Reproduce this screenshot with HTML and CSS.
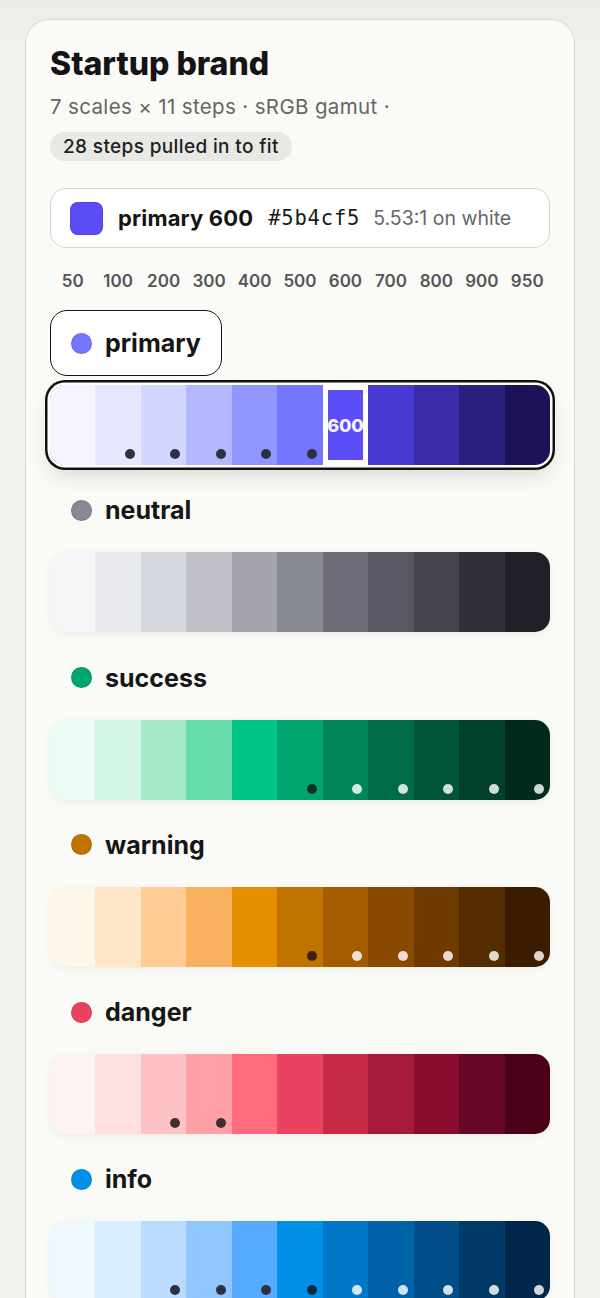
FILE: index.html
```html
<!DOCTYPE html>
<html lang="en">
<head>
<meta charset="utf-8">
<title>Startup brand</title>
<link rel="stylesheet" href="styles.css">
</head>
<body>
<main class="card">
  <h1 class="title">Startup brand</h1>
  <p class="meta">7 scales × 11 steps · sRGB gamut ·</p>
  <span class="pill">28 steps pulled in to fit</span>

  <div class="info">
    <span class="info-chip"></span>
    <span class="info-name">primary 600</span>
    <span class="info-hex">#5b4cf5</span>
    <span class="info-ratio">5.53:1 on white</span>
  </div>

  <div class="steps">
    <span>50</span><span>100</span><span>200</span><span>300</span><span>400</span><span>500</span><span>600</span><span>700</span><span>800</span><span>900</span><span>950</span>
  </div>

  <section class="scale">
    <div class="label label-active"><span class="label-dot primary-dot"></span>primary</div>
    <div class="strip strip-active">
      <div class="sw p50"></div>
      <div class="sw p100"><i class="dot dark"></i></div>
      <div class="sw p200"><i class="dot dark"></i></div>
      <div class="sw p300"><i class="dot dark"></i></div>
      <div class="sw p400"><i class="dot dark"></i></div>
      <div class="sw p500"><i class="dot dark"></i></div>
      <div class="sw p600 selected">600</div>
      <div class="sw p700"></div>
      <div class="sw p800"></div>
      <div class="sw p900"></div>
      <div class="sw p950"></div>
    </div>
  </section>

  <section class="scale">
    <div class="label"><span class="label-dot neutral-dot"></span>neutral</div>
    <div class="strip">
      <div class="sw n50"></div>
      <div class="sw n100"></div>
      <div class="sw n200"></div>
      <div class="sw n300"></div>
      <div class="sw n400"></div>
      <div class="sw n500"></div>
      <div class="sw n600"></div>
      <div class="sw n700"></div>
      <div class="sw n800"></div>
      <div class="sw n900"></div>
      <div class="sw n950"></div>
    </div>
  </section>

  <section class="scale">
    <div class="label"><span class="label-dot success-dot"></span>success</div>
    <div class="strip">
      <div class="sw s50"></div>
      <div class="sw s100"></div>
      <div class="sw s200"></div>
      <div class="sw s300"></div>
      <div class="sw s400"></div>
      <div class="sw s500"><i class="dot deep-green"></i></div>
      <div class="sw s600"><i class="dot light"></i></div>
      <div class="sw s700"><i class="dot light"></i></div>
      <div class="sw s800"><i class="dot light"></i></div>
      <div class="sw s900"><i class="dot light"></i></div>
      <div class="sw s950"><i class="dot light"></i></div>
    </div>
  </section>

  <section class="scale">
    <div class="label"><span class="label-dot warning-dot"></span>warning</div>
    <div class="strip">
      <div class="sw w50"></div>
      <div class="sw w100"></div>
      <div class="sw w200"></div>
      <div class="sw w300"></div>
      <div class="sw w400"></div>
      <div class="sw w500"><i class="dot deep-brown"></i></div>
      <div class="sw w600"><i class="dot light"></i></div>
      <div class="sw w700"><i class="dot light"></i></div>
      <div class="sw w800"><i class="dot light"></i></div>
      <div class="sw w900"><i class="dot light"></i></div>
      <div class="sw w950"><i class="dot light"></i></div>
    </div>
  </section>

  <section class="scale">
    <div class="label"><span class="label-dot danger-dot"></span>danger</div>
    <div class="strip">
      <div class="sw d50"></div>
      <div class="sw d100"></div>
      <div class="sw d200"><i class="dot dark-brown"></i></div>
      <div class="sw d300"><i class="dot dark-brown"></i></div>
      <div class="sw d400"></div>
      <div class="sw d500"></div>
      <div class="sw d600"></div>
      <div class="sw d700"></div>
      <div class="sw d800"></div>
      <div class="sw d900"></div>
      <div class="sw d950"></div>
    </div>
  </section>

  <section class="scale">
    <div class="label"><span class="label-dot info-dot"></span>info</div>
    <div class="strip">
      <div class="sw i50"></div>
      <div class="sw i100"></div>
      <div class="sw i200"><i class="dot dark"></i></div>
      <div class="sw i300"><i class="dot dark"></i></div>
      <div class="sw i400"><i class="dot dark"></i></div>
      <div class="sw i500"><i class="dot deep-navy"></i></div>
      <div class="sw i600"><i class="dot light"></i></div>
      <div class="sw i700"><i class="dot light"></i></div>
      <div class="sw i800"><i class="dot light"></i></div>
      <div class="sw i900"><i class="dot light"></i></div>
      <div class="sw i950"><i class="dot light"></i></div>
    </div>
  </section>
</main>
</body>
</html>
```

FILE: styles.css
```css
* { box-sizing: border-box; }

html, body { margin: 0; }

body {
  background: linear-gradient(#ecece8, #f1f1ed 60px);
  padding: 19px 25px 0;
  font-family: Inter, "Noto Sans", "Liberation Sans", sans-serif;
  color: #161616;
}

.card {
  width: 550px;
  background: #fafaf6;
  border: 1px solid #dadad4;
  border-radius: 24px;
  padding: 26px 24px 40px;
  box-shadow: 0 1px 2px rgba(0,0,0,0.03);
}

.title {
  margin: 0;
  font-size: 32px;
  line-height: 36px;
  font-weight: 800;
  letter-spacing: 0;
  color: #141414;
}

.meta {
  margin: 12px 0 0;
  font-size: 20.5px;
  line-height: 26px;
  letter-spacing: 0.35px;
  color: #666664;
  font-weight: 400;
}

.pill {
  display: inline-block;
  margin-top: 12px;
  height: 29px;
  line-height: 29px;
  padding: 0 13px 0 13px;
  border-radius: 15px;
  background: #e8e8e4;
  font-size: 19px;
  letter-spacing: 0.36px;
  font-weight: 500;
  color: #1e1e1e;
}

.info {
  margin-top: 27px;
  height: 60px;
  display: flex;
  align-items: center;
  gap: 15px;
  padding: 0 19px;
  background: #fff;
  border: 1px solid #d6d6d0;
  border-radius: 16px;
}

.info-chip {
  width: 33px;
  height: 33px;
  border-radius: 8px;
  background: #5b4cf5;
  box-shadow: inset 0 0 0 1px rgba(0,0,0,0.12);
}

.info-name {
  font-size: 22px;
  letter-spacing: 0.15px;
  font-weight: 700;
  color: #141414;
}

.info-hex {
  font-family: "DejaVu Sans Mono", "Liberation Mono", monospace;
  font-size: 20.5px;
  letter-spacing: 0.8px;
  color: #1a1a1a;
}

.info-ratio {
  margin-left: -2px;
  font-size: 19.5px;
  color: #66666a;
}

.steps {
  margin-top: 22px;
  display: grid;
  grid-template-columns: repeat(11, 1fr);
  text-align: center;
  font-size: 17px;
  line-height: 22px;
  font-weight: 600;
  color: #555558;
}

.scale { margin-top: 12.3px; }
.steps + .scale { margin-top: 18px; }

.label {
  display: inline-flex;
  align-items: center;
  gap: 13px;
  height: 66px;
  padding: 0 20px 0 20px;
  border: 1.5px solid transparent;
  border-radius: 17px;
  font-size: 25px;
  font-weight: 700;
  color: #161616;
}

.label-active {
  background: #fff;
  border-color: #141414;
}

.label-dot {
  width: 21px;
  height: 21px;
  border-radius: 50%;
  box-shadow: inset 0 0 0 1px rgba(0,0,0,0.08);
}

.primary-dot { background: #7476ff; }
.neutral-dot { background: #878993; }
.success-dot { background: #00a56f; }
.warning-dot { background: #c17300; }
.danger-dot  { background: #e84360; }
.info-dot    { background: #0090e8; }

.strip {
  margin-top: 9px;
  height: 80px;
  display: grid;
  grid-template-columns: repeat(11, 1fr);
  border-radius: 15px;
  overflow: hidden;
  box-shadow: 0 2px 6px rgba(0,0,0,0.06);
}

.strip-active {
  overflow: visible;
  box-shadow: 0 0 0 2.5px #fff, 0 0 0 5px #111, 0 10px 22px rgba(0,0,0,0.14);
}

.strip-active .sw:first-child { border-radius: 15px 0 0 15px; }
.strip-active .sw:last-child { border-radius: 0 15px 15px 0; }

.sw { position: relative; }

.selected {
  box-shadow: inset 0 0 0 5px #fff;
  display: flex;
  align-items: center;
  justify-content: center;
  color: #f4f2ff;
  font-size: 18px;
  font-weight: 800;
  letter-spacing: -0.2px;
}

.dot {
  position: absolute;
  right: 6px;
  bottom: 6px;
  width: 10px;
  height: 10px;
  border-radius: 50%;
}
.dot.dark { background: #2e3140; }
.dot.dark-brown { background: #3d302e; }
.dot.deep-green { background: #0c3324; }
.dot.deep-brown { background: #3a2208; }
.dot.deep-navy { background: #0c2a44; }
.dot.light { background: rgba(255,255,255,0.82); }

/* primary */
.p50 { background: #f5f5ff; }
.p100 { background: #e6e8ff; }
.p200 { background: #d3d6ff; }
.p300 { background: #b4b9ff; }
.p400 { background: #9196ff; }
.p500 { background: #7476ff; }
.p600 { background: #5b4cf5; }
.p700 { background: #4a38d2; }
.p800 { background: #3a2ba8; }
.p900 { background: #2a1f7e; }
.p950 { background: #1b1258; }

/* neutral */
.n50 { background: #f6f6f9; }
.n100 { background: #e9eaee; }
.n200 { background: #d6d8df; }
.n300 { background: #c0c1c8; }
.n400 { background: #a3a4ad; }
.n500 { background: #878993; }
.n600 { background: #6d6e79; }
.n700 { background: #575863; }
.n800 { background: #43444e; }
.n900 { background: #30313a; }
.n950 { background: #202128; }

/* success */
.s50 { background: #ecfcf4; }
.s100 { background: #d2f5e4; }
.s200 { background: #a5e9c9; }
.s300 { background: #68dcaa; }
.s400 { background: #00c587; }
.s500 { background: #00a56f; }
.s600 { background: #008559; }
.s700 { background: #006b47; }
.s800 { background: #00553a; }
.s900 { background: #00402b; }
.s950 { background: #002a1b; }

/* warning */
.w50 { background: #fff6ea; }
.w100 { background: #ffe6c9; }
.w200 { background: #ffcc96; }
.w300 { background: #f7b160; }
.w400 { background: #e68f00; }
.w500 { background: #c17300; }
.w600 { background: #a35d00; }
.w700 { background: #874a00; }
.w800 { background: #6e3a00; }
.w900 { background: #552b00; }
.w950 { background: #3c1c00; }

/* danger */
.d50 { background: #fff2f2; }
.d100 { background: #ffe0e1; }
.d200 { background: #ffc2c4; }
.d300 { background: #ffa0a6; }
.d400 { background: #ff6c7c; }
.d500 { background: #e84360; }
.d600 { background: #c82b48; }
.d700 { background: #a5193a; }
.d800 { background: #880d2e; }
.d900 { background: #670524; }
.d950 { background: #4a0016; }

/* info */
.i50 { background: #eff7ff; }
.i100 { background: #daecff; }
.i200 { background: #bcdcff; }
.i300 { background: #92c6ff; }
.i400 { background: #56aaff; }
.i500 { background: #0090e8; }
.i600 { background: #0077c8; }
.i700 { background: #0062a8; }
.i800 { background: #004d87; }
.i900 { background: #003a68; }
.i950 { background: #00264a; }
```
